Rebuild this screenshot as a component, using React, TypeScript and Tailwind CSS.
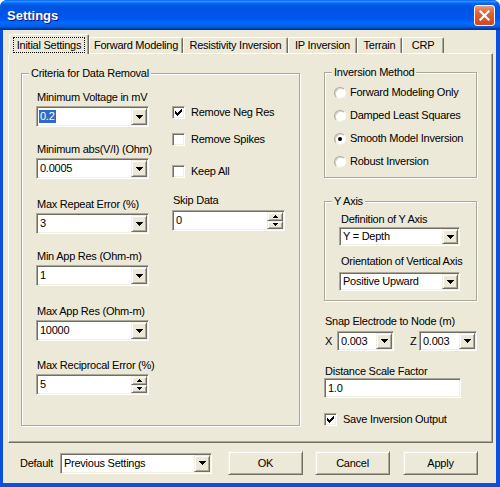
const raised =
  'border border-t-[#f1efe2] border-l-[#f1efe2] border-r-[#716f64] border-b-[#716f64] shadow-[inset_1px_1px_0_#fff,inset_-1px_-1px_0_#aca899] bg-[#ece9d8]'
const sunken =
  'border border-t-[#aca899] border-l-[#aca899] border-r-white border-b-white shadow-[inset_1px_1px_0_#716f64,inset_-1px_-1px_0_#f1efe2] bg-white'

type ComboProps = { value: string; className?: string; highlight?: boolean }
type TabProps = { label: string; className: string; selected?: boolean }
type GroupProps = { title: string; className?: string; children: React.ReactNode }

function DownArrow() {
  return (
    <svg width="7" height="4" viewBox="0 0 7 4" shapeRendering="crispEdges">
      <path d="M0 0h7v1h-1v1h-1v1h-1v1h-1v-1h-1v-1h-1v-1h-1z" fill="#000" />
    </svg>
  )
}

function SmallArrow({ up }: { up?: boolean }) {
  return (
    <svg width="5" height="3" viewBox="0 0 5 3" shapeRendering="crispEdges">
      <path
        d={up ? 'M2 0h1v1h1v1h1v1h-5v-1h1v-1h1z' : 'M0 0h5v1h-1v1h-1v1h-1v-1h-1v-1h-1z'}
        fill="#000"
      />
    </svg>
  )
}

function Combo({ value, className = '', highlight = false }: ComboProps) {
  return (
    <div className={`flex p-px ${sunken} ${className}`}>
      <div className="flex min-w-0 flex-1 items-center pl-[1px]">
        <span className={highlight ? 'bg-[#316ac5] px-px text-white' : 'px-px'}>{value}</span>
      </div>
      <div className={`flex w-[16px] items-center justify-center ${raised}`}>
        <DownArrow />
      </div>
    </div>
  )
}

function Spin({ value, className = '' }: ComboProps) {
  return (
    <div className={`flex p-px ${sunken} ${className}`}>
      <div className="flex min-w-0 flex-1 items-center pl-[2px]">{value}</div>
      <div className="flex w-[16px] flex-col">
        <div className={`flex flex-1 items-center justify-center ${raised}`}>
          <SmallArrow up />
        </div>
        <div className={`flex flex-1 items-center justify-center ${raised}`}>
          <SmallArrow />
        </div>
      </div>
    </div>
  )
}

function Check({ checked }: { checked?: boolean }) {
  return (
    <div className={`flex size-[13px] shrink-0 items-center justify-center ${sunken}`}>
      {checked && (
        <svg width="7" height="7" viewBox="0 0 7 7" shapeRendering="crispEdges">
          <path
            d="M6 0h1v1h-1zM5 1h2v1h-2zM0 2h1v1h-1zM4 2h3v1h-3zM0 3h2v1h-2zM3 3h3v1h-3zM0 4h5v1h-5zM1 5h3v1h-3zM2 6h1v1h-1z"
            fill="#000"
          />
        </svg>
      )}
    </div>
  )
}

function Radio({ checked }: { checked?: boolean }) {
  return (
    <div className="flex size-[12px] shrink-0 items-center justify-center rounded-full border border-t-[#aca899] border-l-[#aca899] border-r-white border-b-[#f1efe2] bg-white shadow-[inset_1px_1px_0_#d8d6cc]">
      {checked && <div className="size-[4px] rounded-full bg-black" />}
    </div>
  )
}

function Group({ title, className = '', children }: GroupProps) {
  return (
    <div
      className={`relative border border-[#aca899] shadow-[inset_1px_1px_0_#fff,1px_1px_0_#fff] ${className}`}
    >
      <span className="absolute left-[7px] top-[-7px] bg-[#ece9d8] px-[2px] leading-[13px]">
        {title}
      </span>
      {children}
    </div>
  )
}

function Tab({ label, className, selected }: TabProps) {
  if (selected) {
    return (
      <div
        className={`relative z-10 mb-[-1px] flex h-[20px] items-center justify-center rounded-t-[2px] border-t border-l border-t-white border-l-white border-r border-r-[#716f64] bg-[#ece9d8] shadow-[inset_-1px_0_0_#aca899] ${className}`}
      >
        <span className="border border-dotted border-black px-[3px] leading-[14px]">{label}</span>
      </div>
    )
  }
  return (
    <div
      className={`flex h-[16px] items-center justify-center rounded-t-[2px] border-t border-l border-t-white border-l-white border-r border-r-[#716f64] shadow-[inset_-1px_0_0_#aca899] ${className}`}
    >
      {label}
    </div>
  )
}

function Field({ label, className = '', children }: { label: string; className?: string; children: React.ReactNode }) {
  return (
    <div className={`flex flex-col ${className}`}>
      <div className="pl-[1px] leading-[13px]">{label}</div>
      {children}
    </div>
  )
}

function Button({ label, className = '' }: { label: string; className?: string }) {
  return (
    <div className={`flex h-[24px] w-[75px] items-center justify-center ${raised} ${className}`}>
      {label}
    </div>
  )
}

export default function App() {
  return (
    <div className="flex h-[487px] w-[500px] flex-col overflow-hidden whitespace-nowrap rounded-t-[7px] bg-[#0a4fe0] font-['Liberation_Sans',Arial,sans-serif] text-[11px] leading-[13px] tracking-[-0.25px] text-black">
      {/* title bar */}
      <div className="flex h-[30px] shrink-0 items-center justify-between bg-[linear-gradient(180deg,#0058ee_0%,#3593ff_4%,#288eff_6%,#127dff_8%,#036ffc_10%,#0262ee_14%,#0057e5_20%,#0054e3_24%,#0055eb_56%,#005bf5_66%,#026afe_76%,#0062ef_86%,#0052d6_92%,#0040ab_94%,#003092_100%)] pl-[7px] pr-[5px]">
        <span className="text-[13px] font-bold tracking-normal text-white [text-shadow:1px_1px_0_#0a1883]">Settings</span>
        <div className="flex size-[21px] items-center justify-center rounded-[3px] border border-white bg-[linear-gradient(180deg,#ec9a7c_0%,#e2603c_35%,#d4461f_100%)]">
          <svg width="11" height="11" viewBox="0 0 11 11">
            <path d="M1.5 1.5l8 8M9.5 1.5l-8 8" stroke="#fff" strokeWidth="2.2" strokeLinecap="square" />
          </svg>
        </div>
      </div>

      {/* client area */}
      <div className="mb-[4px] ml-[3px] mr-[4px] flex flex-1 flex-col bg-[#ece9d8]">
        <div className="flex h-[23px] items-end pl-[6px]">
          <Tab label="Initial Settings" className="w-[80px]" selected />
          <Tab label="Forward Modeling" className="w-[94px]" />
          <Tab label="Resistivity Inversion" className="w-[105px]" />
          <Tab label="IP Inversion" className="w-[69px]" />
          <Tab label="Terrain" className="w-[45px]" />
          <Tab label="CRP" className="w-[42px]" />
        </div>

        <div className="ml-[5px] flex h-[390px] w-[485px] items-start border border-t-white border-l-white border-r-[#716f64] border-b-[#716f64] pl-[12px] pt-[18px] shadow-[inset_-1px_-1px_0_#aca899]">
          <Group title="Criteria for Data Removal" className="mt-[1px] flex h-[353px] w-[279px] shrink-0 items-start pl-[14px] pt-[17px]">
            <div className="flex w-[113px] flex-col">
              <Field label="Minimum Voltage in mV">
                <Combo value="0.2" highlight className="mt-[2px] h-[21px]" />
              </Field>
              <Field label="Minimum abs(V/I) (Ohm)" className="mt-[16px]">
                <Combo value="0.0005" className="mt-[2px] h-[21px]" />
              </Field>
              <Field label="Max Repeat Error (%)" className="mt-[19px]">
                <Combo value="3" className="mt-[2px] h-[21px]" />
              </Field>
              <Field label="Min App Res (Ohm-m)" className="mt-[16px]">
                <Combo value="1" className="mt-[2px] h-[21px]" />
              </Field>
              <Field label="Max App Res (Ohm-m)" className="mt-[19px]">
                <Combo value="10000" className="mt-[2px] h-[21px]" />
              </Field>
              <Field label="Max Reciprocal Error (%)" className="mt-[18px]">
                <Spin value="5" className="mt-[2px] h-[21px]" />
              </Field>
            </div>

            <div className="ml-[23px] flex w-[113px] flex-col">
              <div className="mt-[15px] flex h-[13px] items-center gap-[6px]">
                <Check checked />
                <span>Remove Neg Res</span>
              </div>
              <div className="mt-[14px] flex h-[13px] items-center gap-[6px]">
                <Check />
                <span>Remove Spikes</span>
              </div>
              <div className="mt-[19px] flex h-[13px] items-center gap-[6px]">
                <Check />
                <span>Keep All</span>
              </div>
              <Field label="Skip Data" className="mt-[16px]">
                <Spin value="0" className="mt-[3px] h-[21px]" />
              </Field>
            </div>
          </Group>

          <div className="ml-[24px] flex w-[153px] flex-col">
            <Group title="Inversion Method" className="flex h-[106px] flex-col gap-[10px] pl-[9px] pt-[13px]">
              {['Forward Modeling Only', 'Damped Least Squares', 'Smooth Model Inversion', 'Robust Inversion'].map(
                (item) => (
                  <div key={item} className="flex h-[13px] items-center gap-[4px]">
                    <Radio checked={item === 'Smooth Model Inversion'} />
                    <span>{item}</span>
                  </div>
                ),
              )}
            </Group>

            <Group title="Y Axis" className="mt-[23px] flex h-[100px] flex-col pl-[14px] pt-[11px]">
              <div className="pl-[2px]">Definition of Y Axis</div>
              <Combo value="Y = Depth" className="mt-[1px] h-[19px] w-[121px]" />
              <div className="mt-[9px] pl-[2px]">Orientation of Vertical Axis</div>
              <Combo value="Positive Upward" className="mt-[4px] h-[19px] w-[121px]" />
            </Group>

            <div className="mt-[14px] pl-[1px]">Snap Electrode to Node (m)</div>
            <div className="mt-[3px] flex h-[20px] items-center">
              <span className="w-[13px] pl-[1px]">X</span>
              <Combo value="0.003" className="h-[20px] w-[57px]" />
              <span className="ml-[16px] w-[9px]">Z</span>
              <Combo value="0.003" className="h-[20px] w-[58px]" />
            </div>

            <div className="mt-[14px] pl-[1px]">Distance Scale Factor</div>
            <div className={`flex h-[20px] w-[137px] items-center pl-[3px] ${sunken}`}>1.0</div>

            <div className="mt-[15px] flex h-[13px] items-center gap-[6px]">
              <Check checked />
              <span>Save Inversion Output</span>
            </div>
          </div>
        </div>

        <div className="flex h-[40px] items-center pl-[17px]">
          <span className="w-[40px]">Default</span>
          <Combo value="Previous Settings" className="h-[21px] w-[152px]" />
          <Button label="OK" className="ml-[16px]" />
          <Button label="Cancel" className="ml-[12px]" />
          <Button label="Apply" className="ml-[13px]" />
        </div>
      </div>
    </div>
  )
}
